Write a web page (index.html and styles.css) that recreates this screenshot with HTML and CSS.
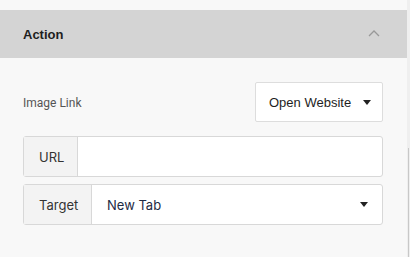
FILE: index.html
```html
<!DOCTYPE html>
<html lang="en">
<head>
<meta charset="UTF-8"/>
<meta name="viewport" content="width=device-width, initial-scale=1.0"/>
<title>Action</title>
<link rel="stylesheet" href="styles.css">
</head>
<body>
  <div class="panel">
    <div class="panel-head">
      <span class="panel-title">Action</span>
      <svg class="chevron" width="12" height="7" viewBox="0 0 12 7"><path d="M1 6 L6 1 L11 6" fill="none" stroke="#999" stroke-width="1.3"/></svg>
    </div>
    <div class="panel-body">
      <div class="field-row">
        <label class="field-label">Image Link</label>
        <div class="select-box">
          <span>Open Website</span>
          <span class="caret"></span>
        </div>
      </div>
      <div class="group">
        <div class="group-label url-label">URL</div>
        <div class="group-input"></div>
      </div>
      <div class="group">
        <div class="group-label target-label">Target</div>
        <div class="group-input">
          <span>New Tab</span>
          <span class="caret"></span>
        </div>
      </div>
    </div>
  </div>
  <div class="scrollbar"><div class="thumb"></div></div>
</body>
</html>
```

FILE: styles.css
```css
body { margin: 0; background: #f8f8f8; font-family: "Liberation Sans", Arial, sans-serif; color: #222; }
.panel { width: 407px; padding-top: 10px; }
.panel-head { height: 48px; background: #d4d4d4; display: flex; align-items: center; justify-content: space-between; padding: 0 27px 0 23px; box-sizing: border-box; }
.panel-title { font-size: 13px; font-weight: bold; color: #1e1e1e; }
.chevron { margin-top: -1px; }
.panel-body { padding: 24px 24px 0 23px; }
.field-row { display: flex; justify-content: space-between; align-items: center; margin-bottom: 14px; }
.field-label { font-family: Roboto, sans-serif; font-size: 12px; color: #555; padding-top: 1px; }
.select-box { width: 128px; height: 40px; box-sizing: border-box; background: #fff; border: 1px solid #ddd; border-radius: 2px; display: flex; align-items: center; justify-content: space-between; padding: 0 11px 0 13px; font-size: 13px; color: #1e1e1e; }
.caret { width: 0; height: 0; border-left: 4.5px solid transparent; border-right: 4.5px solid transparent; border-top: 5px solid #222; }
.group { display: flex; height: 41px; box-sizing: border-box; border: 1px solid #d8d8d8; border-radius: 3px; background: #fff; margin-bottom: 7px; }
.group-label { background: #f3f3f3; border-right: 1px solid #d8d8d8; display: flex; align-items: center; padding-left: 15px; font-family: Inter, sans-serif; font-size: 13px; color: #333; box-sizing: border-box; }
.url-label { width: 54px; }
.target-label { width: 68px; }
.group-input { flex: 1; display: flex; align-items: center; justify-content: space-between; padding: 0 14px 0 15px; font-family: Inter, sans-serif; font-size: 13px; color: #1e2a44; }
.scrollbar { position: absolute; top: 0; right: 0; width: 3px; height: 257px; background: #efefef; }
.thumb { position: absolute; top: 148px; right: 1px; width: 1px; height: 109px; background: #c8c8c8; }
```
